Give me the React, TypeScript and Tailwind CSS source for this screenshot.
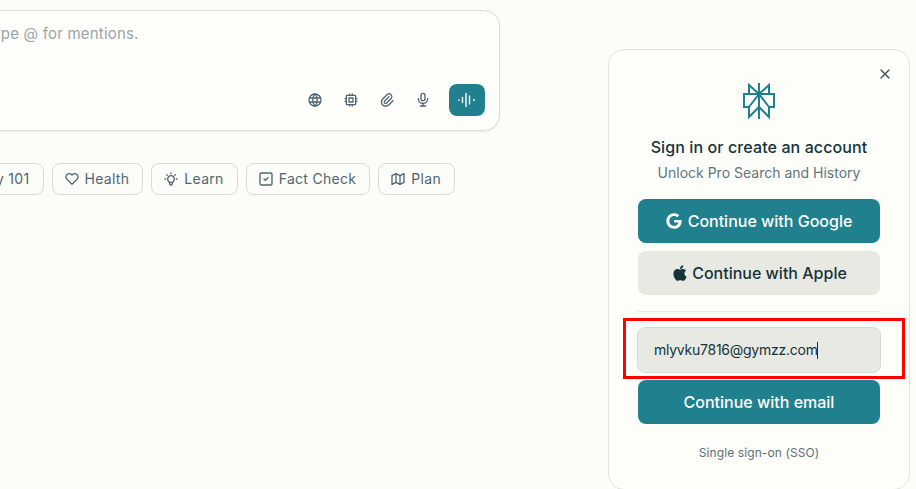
import { TbWorld, TbCpu, TbPaperclip, TbMicrophone, TbHeart, TbBulb, TbSquareCheck, TbMap, TbX, TbCoin } from "react-icons/tb";
import { FaGoogle, FaApple } from "react-icons/fa";
import type { ReactNode } from "react";

function Chip({ icon, label }: { icon: ReactNode; label: string }) {
  return (
    <div className="flex h-[32px] items-center gap-[5px] rounded-lg border border-[#d9d9d5] pl-[11px] pr-[13px] text-sm tracking-[0.3px] text-[#4f6672]">
      {icon}
      <span>{label}</span>
    </div>
  );
}

function Logo() {
  return (
    <svg width="34" height="38" viewBox="0 0 34 38" fill="none" stroke="#20808d" strokeWidth="2" className="mb-[15px]">
      <path d="M17 1V37" />
      <path d="M2 12H32V25H27V35L17 25L7 35V25H2Z" />
      <path d="M17 12L7 3V12M17 12L27 3V12M17 12L7 25M17 12L27 25" />
    </svg>
  );
}

function Wave() {
  return (
    <svg width="20" height="20" viewBox="0 0 20 20" stroke="#fff" strokeWidth="1.4" strokeLinecap="round">
      <path d="M2 10v0.6M5.5 7.5v5M9 3.5v13M12.5 6v8M17 9.5v1" />
    </svg>
  );
}

const ic = "text-[16px] text-[#4f6672]";

export default function App() {
  return (
    <div className="relative flex h-[489px] w-[916px] overflow-hidden bg-[#fcfcf9] font-['Inter',sans-serif]">
      <div className="w-[608px] shrink-0">
        <div className="ml-[-143px] mt-[10px] w-[643px]">
          <div className="flex h-[121px] flex-col justify-between rounded-2xl border border-[#dcdcd8] bg-[#fefefb] pb-[14px] pl-[22px] pr-[14px] pt-[13px] shadow-[0_1px_2px_rgba(0,0,0,0.08)]">
            <div className="text-[15px] leading-[20px] tracking-[0.2px] text-[#9aa5a8]">Ask anything. Type @ for mentions.</div>
            <div className="flex items-center justify-end">
              <div className="flex items-center gap-[20px] pr-[18px] text-[#4f6672]">
                <TbWorld size={16} />
                <TbCpu size={16} />
                <TbPaperclip size={16} />
                <TbMicrophone size={16} />
              </div>
              <div className="flex h-[32px] w-[36px] items-center justify-center rounded-lg bg-[#20808d]">
                <Wave />
              </div>
            </div>
          </div>
          <div className="mt-[32px] flex justify-end gap-[8px] pr-[45px]">
            <Chip icon={<TbCoin className={ic} />} label="Money 101" />
            <Chip icon={<TbHeart className={ic} />} label="Health" />
            <Chip icon={<TbBulb className={ic} />} label="Learn" />
            <Chip icon={<TbSquareCheck className={ic} />} label="Fact Check" />
            <Chip icon={<TbMap className={ic} />} label="Plan" />
          </div>
        </div>
      </div>

      <div className="relative mt-[49px] flex h-[441px] w-[302px] shrink-0 flex-col items-center rounded-2xl border border-[#e2e2de] bg-[#fdfdfa] px-[29px] pt-[32px]">
        <TbX size={16} className="absolute right-[16px] top-[16px] text-[#3f5660]" />
        <Logo />
        <div className="text-base font-medium leading-[24px] tracking-[0.1px] text-[#13343b]">Sign in or create an account</div>
        <div className="mt-[2px] text-sm leading-[24px] text-[#64757c]">Unlock Pro Search and History</div>
        <button className="mt-[14px] flex h-[44px] w-[242px] items-center justify-center gap-[6px] rounded-lg bg-[#20808d] text-base font-medium text-[#fefefb]">
          <FaGoogle size={16} />
          Continue with Google
        </button>
        <button className="mt-[8px] flex h-[44px] w-[242px] items-center justify-center gap-[3px] rounded-lg bg-[#e9e9e4] text-base font-medium text-[#13343b]">
          <FaApple size={18} />
          Continue with Apple
        </button>
        <div className="mt-[16px] h-px w-[242px] bg-[#e6e6e2]" />
        <div className="mt-[15px] flex h-[46px] w-[244px] items-center rounded-lg border border-[#d9d9d5] bg-[#e9e9e4] px-[16px] text-sm tracking-[-0.25px] text-[#13343b]">
          mlyvku7816@gymzz.com
          <span className="ml-[-1px] inline-block h-[17px] w-px bg-[#13343b]" />
        </div>
        <button className="mt-[7px] flex h-[44px] w-[242px] items-center justify-center rounded-lg bg-[#20808d] text-base font-medium text-[#fefefb]">
          Continue with email
        </button>
        <div className="mt-[20px] text-xs leading-[18px] tracking-[0.1px] text-[#5f6f75]">Single sign-on (SSO)</div>
      </div>

      <div className="pointer-events-none absolute left-[623px] top-[318px] h-[61px] w-[282px] border-[3px] border-[#ff0000]" />
    </div>
  );
}
